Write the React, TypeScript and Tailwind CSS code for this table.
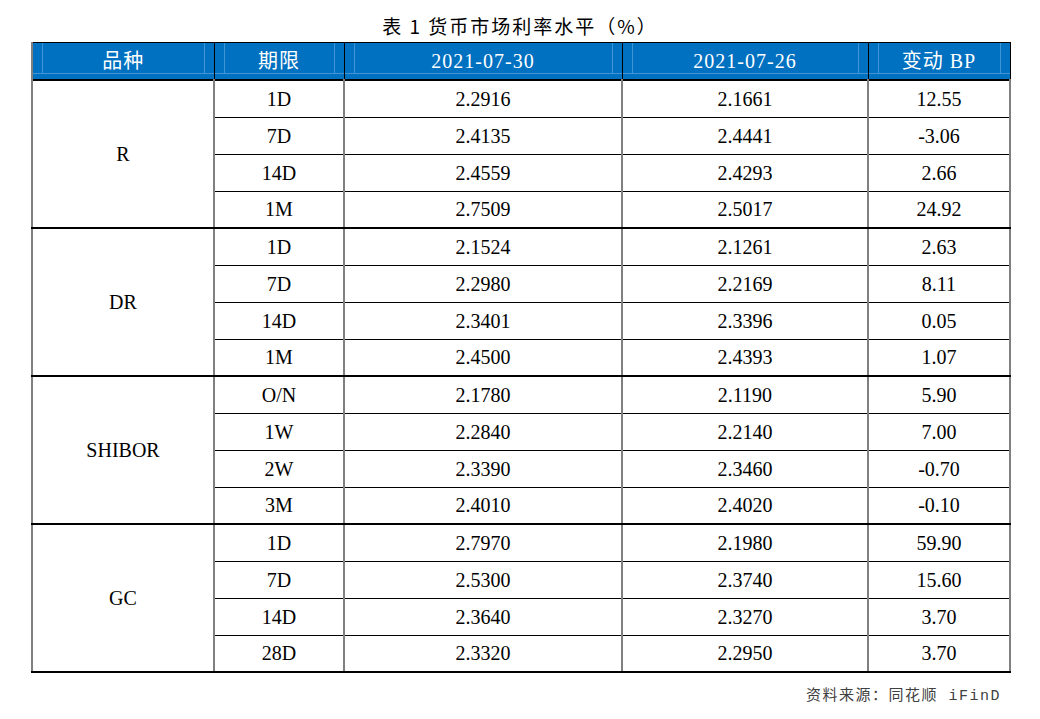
import React from 'react'

type Row = [string, string, string, string]

const groups: { name: string; rows: Row[] }[] = [
  {
    name: 'R',
    rows: [
      ['1D', '2.2916', '2.1661', '12.55'],
      ['7D', '2.4135', '2.4441', '-3.06'],
      ['14D', '2.4559', '2.4293', '2.66'],
      ['1M', '2.7509', '2.5017', '24.92'],
    ],
  },
  {
    name: 'DR',
    rows: [
      ['1D', '2.1524', '2.1261', '2.63'],
      ['7D', '2.2980', '2.2169', '8.11'],
      ['14D', '2.3401', '2.3396', '0.05'],
      ['1M', '2.4500', '2.4393', '1.07'],
    ],
  },
  {
    name: 'SHIBOR',
    rows: [
      ['O/N', '2.1780', '2.1190', '5.90'],
      ['1W', '2.2840', '2.2140', '7.00'],
      ['2W', '2.3390', '2.3460', '-0.70'],
      ['3M', '2.4010', '2.4020', '-0.10'],
    ],
  },
  {
    name: 'GC',
    rows: [
      ['1D', '2.7970', '2.1980', '59.90'],
      ['7D', '2.5300', '2.3740', '15.60'],
      ['14D', '2.3640', '2.3270', '3.70'],
      ['28D', '2.3320', '2.2950', '3.70'],
    ],
  },
]

const headers = ['品种', '期限', '2021-07-30', '2021-07-26', '变动 BP']

function HeaderCell({ label, first }: { label: string; first?: boolean }) {
  return (
    <th
      className={
        'h-[37px] p-0 bg-[#0070c0] border-t border-t-black border-b border-b-black font-normal ' +
        (first ? 'border-l-2 border-l-[#808080] border-r border-r-black' : 'border-r border-r-black')
      }
    >
      <div className="h-[36px] flex flex-col">
        <div className="h-[31px] border-b border-[#3f93d6]">
          <div className="mx-[9px] h-full pt-[5px] border-x border-[#3f93d6] flex items-center justify-center text-white text-[20px] leading-none tracking-[1px] [font-family:'Liberation_Serif','Noto_Sans_CJK_SC',serif]">
            {label}
          </div>
        </div>
      </div>
    </th>
  )
}

export default function App() {
  return (
    <div className="w-[1040px] h-[719px] bg-white text-black [font-family:'Liberation_Serif','Noto_Sans_CJK_SC',serif]">
      <div className="h-[42px] pt-[14px] text-center text-[19px] leading-[24px] tracking-[2px] font-normal [font-family:'Noto_Sans_CJK_SC',sans-serif]">
        表 1 货币市场利率水平（%）
      </div>

      <table className="ml-[31px] w-[978px] table-fixed border-collapse">
        <colgroup>
          <col className="w-[182px]" />
          <col className="w-[130px]" />
          <col className="w-[278px]" />
          <col className="w-[246px]" />
          <col className="w-[142px]" />
        </colgroup>
        <thead>
          <tr>
            {headers.map((h, i) => (
              <HeaderCell key={h} label={h} first={i === 0} />
            ))}
          </tr>
        </thead>
        <tbody>
          {groups.map((g) =>
            g.rows.map((r, ri) => (
              <tr key={g.name + ri} className="h-[37px]">
                {ri === 0 && (
                  <td
                    rowSpan={4}
                    className="p-0 text-center align-middle text-[20px] border-l-2 border-l-[#808080] border-r-2 border-r-[#808080] border-t-2 border-t-black border-b-2 border-b-black"
                  >
                    {g.name}
                  </td>
                )}
                {r.map((v, ci) => (
                  <td
                    key={ci}
                    className={
                      'p-0 text-center align-middle text-[20px] leading-none border-r-2 border-r-[#808080] ' +
                      (ri === 0 ? 'border-t-2 border-t-black ' : 'border-t border-t-black ') +
                      (ri === 3 ? 'border-b-2 border-b-black' : 'border-b border-b-black')
                    }
                  >
                    {v}
                  </td>
                ))}
              </tr>
            ))
          )}
        </tbody>
      </table>

      <div className="w-[1001px] mt-[14px] text-right text-[15px] leading-[20px] tracking-[1.5px] text-[#404040] [font-family:'Liberation_Mono','Noto_Sans_CJK_SC',monospace]">
        资料来源：同花顺 iFinD
      </div>
    </div>
  )
}
